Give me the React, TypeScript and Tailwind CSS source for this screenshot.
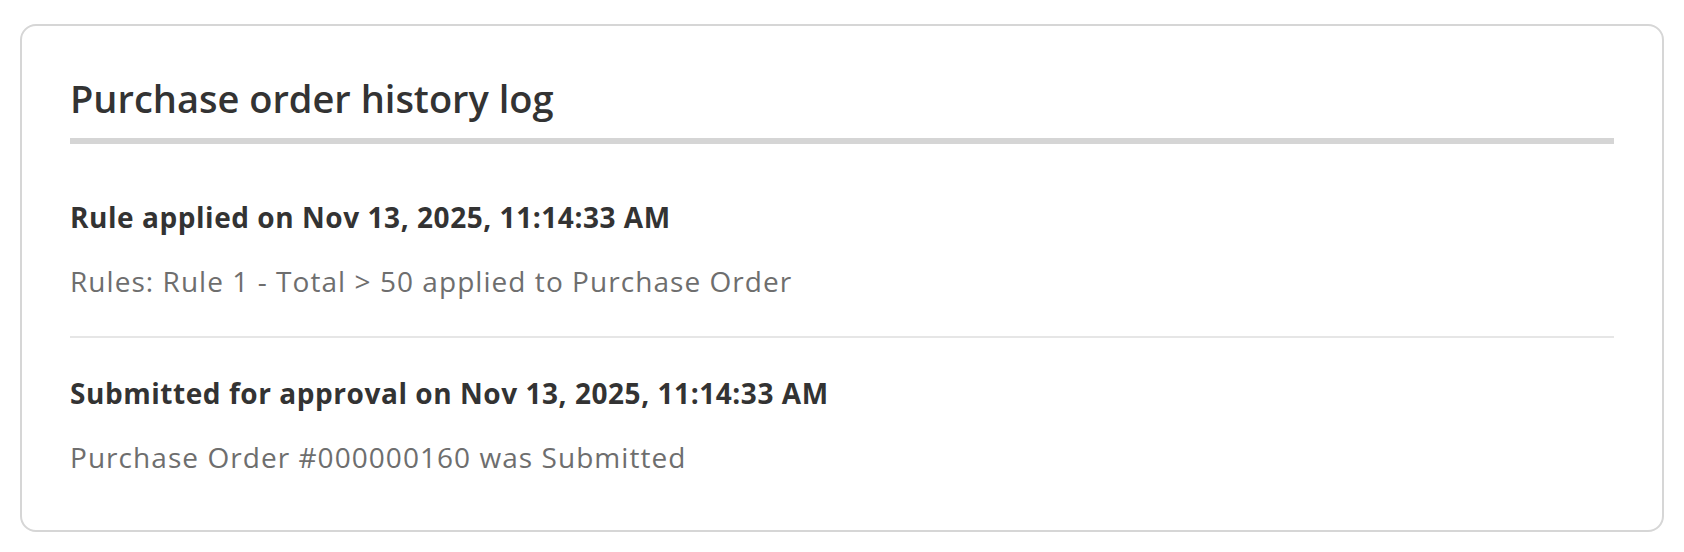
const entries = [
  {
    title: "Rule applied on Nov 13, 2025, 11:14:33 AM",
    detail: "Rules: Rule 1 - Total > 50 applied to Purchase Order",
  },
  {
    title: "Submitted for approval on Nov 13, 2025, 11:14:33 AM",
    detail: "Purchase Order #000000160 was Submitted",
  },
];

export default function App() {
  return (
    <div className="min-h-screen w-full bg-white px-[20px] pt-[24px] pb-[20px] font-['Open_Sans',sans-serif]">
      <section className="rounded-[16px] border-2 border-[#d6d6d6] bg-white px-[48px] pt-[48px]">
        <h2 className="text-[38px] leading-[48px] font-semibold text-[#333333]">
          Purchase order history log
        </h2>
        <div className="mt-[16px] h-[6px] bg-[#d5d5d5]" />

        <ul>
          {entries.map((entry, i) => (
            <li
              key={i}
              className={
                i === 0
                  ? "pt-[55px] pb-[37px] border-b-2 border-[#e6e6e6]"
                  : "pt-[37px] pb-[55px]"
              }
            >
              <h3 className="text-[28px] leading-[36px] font-bold tracking-[0.55px] text-[#333333]">
                {entry.title}
              </h3>
              <p className="mt-[28px] text-[28px] leading-[36px] tracking-[1.05px] text-[#6e6e6e]">
                {entry.detail}
              </p>
            </li>
          ))}
        </ul>
      </section>
    </div>
  );
}
